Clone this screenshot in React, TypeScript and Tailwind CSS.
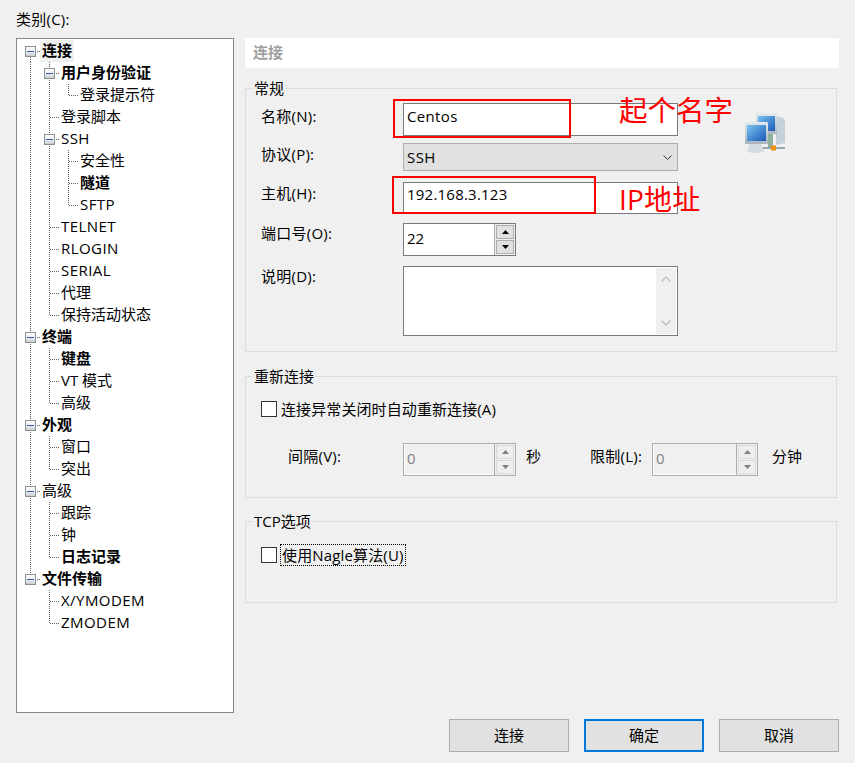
import React from 'react'

type Cell = 'p' | 't' | 'e' | 'b' | 'x' | 'f' | 'l'

interface TreeRow {
  text: string
  cells: Cell[]
  bold?: boolean
  selected?: boolean
  wide?: boolean
}

const TREE: TreeRow[] = [
  { text: '连接', cells: ['f'], bold: true, selected: true },
  { text: '用户身份验证', cells: ['p', 'x'], bold: true },
  { text: '登录提示符', cells: ['p', 'p', 'e'] },
  { text: '登录脚本', cells: ['p', 't'] },
  { text: 'SSH', cells: ['p', 'x'], wide: true },
  { text: '安全性', cells: ['p', 'p', 't'] },
  { text: '隧道', cells: ['p', 'p', 't'], bold: true },
  { text: 'SFTP', cells: ['p', 'p', 'e'], wide: true },
  { text: 'TELNET', cells: ['p', 't'], wide: true },
  { text: 'RLOGIN', cells: ['p', 't'], wide: true },
  { text: 'SERIAL', cells: ['p', 't'], wide: true },
  { text: '代理', cells: ['p', 't'] },
  { text: '保持活动状态', cells: ['p', 'e'] },
  { text: '终端', cells: ['x'], bold: true },
  { text: '键盘', cells: ['p', 't'], bold: true },
  { text: 'VT 模式', cells: ['p', 't'] },
  { text: '高级', cells: ['p', 'e'] },
  { text: '外观', cells: ['x'], bold: true },
  { text: '窗口', cells: ['p', 't'] },
  { text: '突出', cells: ['p', 'e'] },
  { text: '高级', cells: ['x'] },
  { text: '跟踪', cells: ['p', 't'] },
  { text: '钟', cells: ['p', 't'] },
  { text: '日志记录', cells: ['p', 'e'], bold: true },
  { text: '文件传输', cells: ['l'], bold: true },
  { text: 'X/YMODEM', cells: ['b', 't'], wide: true },
  { text: 'ZMODEM', cells: ['b', 'e'], wide: true },
]

function TreeCell({ kind }: { kind: Cell }): React.ReactElement {
  const dots = { stroke: '#5f5f5f', strokeDasharray: '1 1', fill: 'none' }
  const hasBox = kind === 'x' || kind === 'f' || kind === 'l'
  return (
    <svg width="19" height="22" className="shrink-0">
      <defs>
        <linearGradient id="expander" x1="0" y1="0" x2="0" y2="1">
          <stop offset="0" stopColor="#ffffff" />
          <stop offset="0.5" stopColor="#eceef0" />
          <stop offset="1" stopColor="#c8c8c8" />
        </linearGradient>
      </defs>
      {(kind === 'p' || kind === 't' || kind === 'x') && <path d="M9.5 0V22" {...dots} />}
      {kind === 'e' && <path d="M9.5 0V11" {...dots} />}
      {kind === 'f' && <path d="M9.5 11V22" {...dots} />}
      {kind === 'l' && <path d="M9.5 0V11" {...dots} />}
      {kind !== 'p' && kind !== 'b' && <path d="M10 11.5H19" {...dots} />}
      {hasBox && (
        <>
          <rect x="4.5" y="6.5" width="10" height="10" fill="url(#expander)" stroke="#8c8f94" />
          <path d="M6 11.5H13" stroke="#3f5fa8" />
        </>
      )}
    </svg>
  )
}

function ArrowUp({ color }: { color: string }): React.ReactElement {
  return (
    <svg width="7" height="4" viewBox="0 0 7 4">
      <path d="M3.5 0L7 4H0Z" fill={color} />
    </svg>
  )
}

function ArrowDown({ color }: { color: string }): React.ReactElement {
  return (
    <svg width="7" height="4" viewBox="0 0 7 4">
      <path d="M0 0H7L3.5 4Z" fill={color} />
    </svg>
  )
}

function Spin({ value, disabled, width }: { value: string; disabled?: boolean; width: string }): React.ReactElement {
  return (
    <div
      className={`flex h-[33px] ${width} border ${
        disabled ? 'border-[#adadad] bg-[#f0f0f0]' : 'border-[#7a7a7a] bg-white'
      }`}
    >
      <div
        className={`flex-1 text-[15px] leading-[28px] ${
          disabled ? 'border-b border-l border-white pl-[2px] text-[#838383]' : 'pl-[3px] text-black'
        }`}
      >
        {value}
      </div>
      <div className="flex w-[21px] flex-col gap-[1px] border-l border-[#adadad] bg-[#f0f0f0] p-[1px]">
        {[0, 1].map((i) => (
          <div
            key={i}
            className={`flex h-[14px] items-center justify-center border ${
              disabled ? 'border-[#d9d9d9] bg-[#eeeeee]' : 'border-[#adadad] bg-[#e1e1e1]'
            }`}
          >
            {i === 0 ? (
              <ArrowUp color={disabled ? '#7f7f7f' : '#000000'} />
            ) : (
              <ArrowDown color={disabled ? '#7f7f7f' : '#000000'} />
            )}
          </div>
        ))}
      </div>
    </div>
  )
}

function Group({ title, className, children }: { title: string; className: string; children: React.ReactNode }): React.ReactElement {
  return (
    <div className={`relative w-[592px] border border-[#dcdcdc] ${className}`}>
      <span className="absolute left-[7px] top-[-11px] bg-[#f0f0f0] px-[1px] text-[15px] leading-[20px]">{title}</span>
      {children}
    </div>
  )
}

function Field({ label, pad, children }: { label: string; pad: string; children: React.ReactNode }): React.ReactElement {
  return (
    <div className="flex items-start">
      <span className={`w-[142px] shrink-0 text-[15px] leading-[20px] tracking-[0.25px] ${pad}`}>{label}</span>
      {children}
    </div>
  )
}

function NetworkIcon(): React.ReactElement {
  return (
    <svg width="41" height="41" viewBox="0 0 41 41" className="mt-[23px] ml-[67px] shrink-0">
      <defs>
        <linearGradient id="screen" x1="0" y1="0" x2="1" y2="1">
          <stop offset="0" stopColor="#7cc4f0" />
          <stop offset="1" stopColor="#1a58b8" />
        </linearGradient>
        <linearGradient id="frame" x1="0" y1="0" x2="0" y2="1">
          <stop offset="0" stopColor="#e4eaf0" />
          <stop offset="1" stopColor="#a9b4bc" />
        </linearGradient>
      </defs>
      <path d="M31 4L36 5.5C39 6 40 7 40 9V31L31 33Z" fill="#c4d0da" />
      <rect x="11" y="1" width="21" height="21" rx="1" fill="url(#frame)" />
      <rect x="13" y="4" width="17" height="15" fill="url(#screen)" />
      <path d="M23 22H28V36H23Z" fill="#8fb09c" />
      <rect x="0" y="10" width="23" height="22" rx="1" fill="url(#frame)" />
      <rect x="2" y="13" width="19" height="16" fill="url(#screen)" />
      <path d="M5 32H16L19 38C19 40 15 41 10 41C5 41 2 40 2 38Z" fill="#d4dce2" />
      <path d="M18 36H40" stroke="#9aa6ae" strokeWidth="2" />
      <rect x="26" y="33.5" width="5" height="5" fill="#f09010" />
    </svg>
  )
}

export default function App(): React.ReactElement {
  return (
    <div className="relative flex h-[763px] w-[855px] overflow-hidden bg-[#f0f0f0] pl-4 text-black [font-family:'Open_Sans','Noto_Sans_CJK_SC',sans-serif]">
      {/* Left: category tree */}
      <div className="flex w-[218px] shrink-0 flex-col">
        <div className="h-[38px] pt-[9px] text-[15px] leading-[20px] tracking-[0.25px]">类别(C):</div>
        <div className="h-[675px] border border-[#828790] bg-white pl-1 pt-[1px]">
          {TREE.map((row, i) => (
            <div key={i} className="flex h-[22px] items-center">
              {row.cells.map((c, j) => (
                <TreeCell key={j} kind={c} />
              ))}
              <span
                className={`px-[2px] pb-[2px] text-[15px] leading-[20px] ${row.bold ? 'font-bold' : ''} ${
                  row.selected ? 'bg-[#f0f0f0]' : ''
                } ${row.wide ? 'tracking-[0.45px]' : ''}`}
              >
                {row.text}
              </span>
            </div>
          ))}
        </div>
      </div>

      {/* Right: settings */}
      <div className="ml-[11px] flex w-[594px] shrink-0 flex-col pt-[38px] pb-[11px]">
        <div className="h-[30px] bg-white pl-2 text-[15px] font-bold leading-[28px] text-[#a0a0a0]">连接</div>

        <Group title="常规" className="mt-[20px] flex h-[264px]">
          <div className="flex w-[432px] shrink-0 flex-col pl-[15px] pt-[14px]">
            <Field label="名称(N):" pad="pt-[3px]">
              <div className="h-[33px] w-[275px] border border-[#7a7a7a] bg-white pl-[3px] text-[15px] leading-[25px] tracking-[0.35px]">Centos</div>
            </Field>
            <div className="mt-[7px]">
              <Field label="协议(P):" pad="pt-[1px]">
                <div className="flex h-[28px] w-[275px] items-center justify-between border border-[#adadad] bg-[#e1e1e1] pl-[3px] pr-[5px] text-[15px]">
                  <span className="tracking-[0.45px]">SSH</span>
                  <svg width="9" height="5" viewBox="0 0 9 5">
                    <path d="M0.5 0.5L4.5 4.5L8.5 0.5" fill="none" stroke="#333333" />
                  </svg>
                </div>
              </Field>
            </div>
            <div className="mt-[11px]">
              <Field label="主机(H):" pad="pt-[1px]">
                <div className="h-[32px] w-[275px] border border-[#7a7a7a] bg-white pl-[3px] text-[15px] leading-[23px] tracking-[0.22px]">192.168.3.123</div>
              </Field>
            </div>
            <div className="mt-[9px]">
              <Field label="端口号(O):" pad="">
                <Spin value="22" width="w-[113px]" />
              </Field>
            </div>
            <div className="mt-[10px]">
              <Field label="说明(D):" pad="">
                <div className="flex h-[70px] w-[275px] border border-[#7a7a7a] bg-white p-[1px]">
                  <div className="flex-1" />
                  <div className="flex w-[20px] flex-col items-center justify-between bg-[#f0f0f0] py-[8px]">
                    <svg width="10" height="6" viewBox="0 0 10 6">
                      <path d="M0.5 5.5L5 1L9.5 5.5" fill="none" stroke="#c2c2c2" strokeWidth="1.5" />
                    </svg>
                    <svg width="10" height="6" viewBox="0 0 10 6">
                      <path d="M0.5 0.5L5 5L9.5 0.5" fill="none" stroke="#c2c2c2" strokeWidth="1.5" />
                    </svg>
                  </div>
                </div>
              </Field>
            </div>
          </div>
          <NetworkIcon />
        </Group>

        <Group title="重新连接" className="mt-[24px] h-[122px] pl-[15px]">
          <div className="mt-[22px] flex items-center">
            <div className="h-[16px] w-[16px] border border-[#333333] bg-white" />
            <span className="ml-[4px] text-[15px] leading-[20px] tracking-[0.1px]">连接异常关闭时自动重新连接(A)</span>
          </div>
          <div className="mt-[24px] flex items-start">
            <span className="ml-[27px] w-[115px] pt-[3px] text-[15px] leading-[20px] tracking-[0.25px]">间隔(V):</span>
            <Spin value="0" disabled width="w-[113px]" />
            <span className="ml-[10px] w-[64px] pt-[3px] text-[15px] leading-[20px]">秒</span>
            <span className="w-[62px] pt-[3px] text-[15px] leading-[20px] tracking-[0.25px]">限制(L):</span>
            <Spin value="0" disabled width="w-[106px]" />
            <span className="ml-[14px] pt-[3px] text-[15px] leading-[20px]">分钟</span>
          </div>
        </Group>

        <Group title="TCP选项" className="mt-[23px] h-[82px] pl-[15px]">
          <div className="mt-[22px] flex items-center">
            <div className="h-[16px] w-[16px] border border-[#333333] bg-white" />
            <span className="ml-[3px] border border-dotted border-black px-[1px] text-[15px] leading-[20px] tracking-[0.15px]">使用Nagle算法(U)</span>
          </div>
        </Group>

        <div className="mt-auto flex justify-end gap-[15px]">
          <button className="h-[33px] w-[120px] border border-[#adadad] bg-[#e1e1e1] text-[15px]">连接</button>
          <button className="h-[33px] w-[120px] border-2 border-[#0078d7] bg-[#e1e1e1] text-[15px]">确定</button>
          <button className="h-[33px] w-[120px] border border-[#adadad] bg-[#e1e1e1] text-[15px]">取消</button>
        </div>
      </div>

      {/* Red annotations drawn over the dialog */}
      <div className="absolute left-[393px] top-[99px] h-[39px] w-[178px] border-2 border-[#ff0000]" />
      <div className="absolute left-[392px] top-[176px] h-[38px] w-[204px] border-2 border-[#ff0000]" />
      <span className="absolute left-[619px] top-[90px] text-[28.5px] leading-[40px] text-[#ff0000]">起个名字</span>
      <span className="absolute left-[619px] top-[179px] text-[28px] leading-[40px] tracking-[0.2px] text-[#ff0000]">IP地址</span>
    </div>
  )
}
